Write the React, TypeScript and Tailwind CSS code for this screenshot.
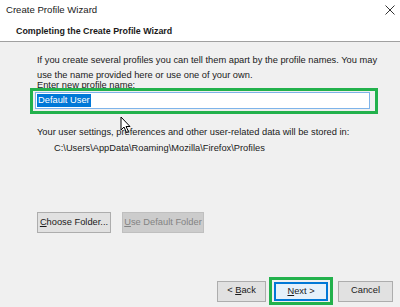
import React from "react";

export default function App() {
  const font = { fontFamily: "'Liberation Sans', Arial, sans-serif" };
  return (
    <div className="w-[400px] h-[307px] bg-[#f0f0f0] text-[9.3px] text-[#1a1a1a] flex flex-col overflow-hidden relative" style={font}>
      <div className="bg-white flex flex-col">
        <div className="h-[20px] flex items-center justify-between pl-[6px] pr-[3px]">
          <span className="text-[9.6px] leading-none">Create Profile Wizard</span>
          <svg width="10" height="10" viewBox="0 0 10 10" className="mr-[2px]">
            <path d="M0.5 0.5 L9.5 9.5 M9.5 0.5 L0.5 9.5" stroke="#333" strokeWidth="1" />
          </svg>
        </div>
        <div className="h-[22px] flex items-start pl-[16px] pt-[7px] font-bold text-[8.9px] leading-none border-b border-[#a0a0a0]">
          Completing the Create Profile Wizard
        </div>
      </div>
      <div className="flex flex-col pl-[37px] pt-[11px] leading-[15px] whitespace-nowrap">
        <p>If you create several profiles you can tell them apart by the profile names. You may</p>
        <p>use the name provided here or use one of your own.</p>
        <p className="-mt-[4px] leading-[12px]">Enter new profile name:</p>
        <div className="-ml-[7px] -mt-[3px] w-[348px] h-[26px] border-[3px] border-[#22b14c] pl-[2px] pr-[5px] pt-[1px] pb-[2px] flex">
          <div className="flex-1 bg-white border border-[#7eb4ea] flex items-center pl-[1px]">
            <span className="bg-[#0078d7] text-white px-[1px] leading-[13px]">Default User</span>
          </div>
        </div>
        <p className="mt-[11px]">Your user settings, preferences and other user-related data will be stored in:</p>
        <p className="mt-[1px] ml-[17px]">C:\Users\AppData\Roaming\Mozilla\Firefox\Profiles</p>
        <div className="flex gap-[11px] mt-[56px]">
          <button className="w-[74px] h-[21px] bg-[#e1e1e1] border border-[#adadad] leading-none"><u>C</u>hoose Folder...</button>
          <button className="w-[82px] h-[21px] bg-[#cccccc] border border-[#bfbfbf] text-[#838383] leading-none"><u>U</u>se Default Folder</button>
        </div>
      </div>
      <div className="flex-1" />
      <div className="flex justify-end items-center pr-[7px] pb-[2px] whitespace-nowrap">
        <button className="w-[49px] h-[21px] bg-[#e1e1e1] border border-[#adadad] leading-none">&lt; <u>B</u>ack</button>
        <div className="ml-[3px] w-[64px] h-[28px] border-[3px] border-[#22b14c] pl-[2px] pt-[2px]">
          <button className="w-[54px] h-[19px] bg-[#e5f1fb] border-2 border-[#0078d7] leading-none"><u>N</u>ext &gt;</button>
        </div>
        <button className="ml-[5px] w-[55px] h-[21px] bg-[#e1e1e1] border border-[#adadad] leading-none">Cancel</button>
      </div>
      <svg className="absolute left-[120px] top-[116px]" width="12" height="18" viewBox="0 0 12 18">
        <path d="M1 1 L1 14 L4 11 L6.5 16.5 L8.5 15.5 L6 10.5 L10 10.5 Z" fill="#fff" stroke="#000" strokeWidth="1" strokeLinejoin="round" />
      </svg>
    </div>
  );
}
